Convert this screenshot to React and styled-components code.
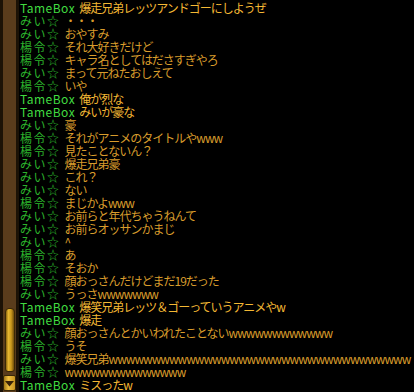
import styled, { createGlobalStyle } from 'styled-components';

const GlobalStyle = createGlobalStyle`
    html, body {
        margin: 0;
        padding: 0;
        background: #000;
    }
`

const lines = [
    ['TameBox', '爆走兄弟レッツアンドゴーにしようぜ'],
    ['みい☆', '・・・'],
    ['みい☆', 'おやすみ'],
    ['楊令☆', 'それ大好きだけど'],
    ['楊令☆', 'キャラ名としてはださすぎやろ'],
    ['みい☆', 'まって元ねたおしえて'],
    ['楊令☆', 'いや'],
    ['TameBox', '俺が烈な'],
    ['TameBox', 'みいが豪な'],
    ['みい☆', '豪'],
    ['楊令☆', 'それがアニメのタイトルやwww'],
    ['楊令☆', '見たことないん？'],
    ['みい☆', '爆走兄弟豪'],
    ['みい☆', 'これ？'],
    ['みい☆', 'ない'],
    ['楊令☆', 'まじかよwww'],
    ['みい☆', 'お前らと年代ちゃうねんて'],
    ['みい☆', 'お前らオッサンかまじ'],
    ['みい☆', '^'],
    ['楊令☆', 'あ'],
    ['楊令☆', 'そおか'],
    ['楊令☆', '顔おっさんだけどまだ19だった'],
    ['みい☆', 'うっさ' + 'w'.repeat(7)],
    ['TameBox', '爆笑兄弟レッツ＆ゴーっていうアニメやw'],
    ['TameBox', '爆走'],
    ['みい☆', '顔おっさんとかいわれたことない' + 'w'.repeat(12)],
    ['楊令☆', 'うそ'],
    ['みい☆', '爆笑兄弟' + 'w'.repeat(35)],
    ['楊令☆', 'w'.repeat(14)],
    ['TameBox', 'ミスったw'],
]

export default function App() {
    return (
        <>
            <GlobalStyle />
            <Frame>
                <ScrollBar>
                    <Thumb />
                    <ArrowButton>
                        <svg width="9" height="7" viewBox="0 0 9 7">
                            <path d="M0 1 H9 L4.5 6.5 Z" fill="#3a2408" />
                        </svg>
                    </ArrowButton>
                </ScrollBar>
                <Log>
                    {lines.map(([name, msg], i) => {
                        const host = name === 'TameBox'
                        return <Line key={i}>
                            <Name $host={host}>{name}</Name>
                            <Msg $host={host}>{msg}</Msg>
                        </Line>
                    })}
                </Log>
            </Frame>
        </>
    )
}

const Frame = styled.div`
    display: flex;
    width: 414px;
    height: 392px;
    overflow: hidden;
    background: #000;
`

const ScrollBar = styled.div`
    flex: 0 0 10px;
    display: flex;
    flex-direction: column;
    justify-content: flex-end;
    align-items: center;
    gap: 3px;
    background: #5a3c1c;
    border-left: 3px solid #1c1206;
    border-right: 3px solid #1c1206;
`

const Thumb = styled.div`
    width: 8px;
    height: 62px;
    border-radius: 4px 4px 3px 3px;
    background: linear-gradient(90deg, #8a6410 0%, #e8b830 30%, #c8961c 65%, #6e4c0a 100%);
    border: 1px solid #3a2808;
`

const ArrowButton = styled.div`
    width: 11px;
    height: 14px;
    margin-bottom: 1px;
    display: flex;
    align-items: center;
    justify-content: center;
    border-radius: 2px;
    background: linear-gradient(90deg, #a07818 0%, #f0c040 40%, #c89420 100%);
    border: 1px solid #3a2808;
`

const Log = styled.div`
    flex: 1;
    min-width: 0;
    display: flex;
    flex-direction: column;
    padding: 1px 0 0 1px;
    font-family: "Noto Sans CJK JP", "Liberation Sans", sans-serif;
    font-size: 12px;
    line-height: 13px;
    white-space: nowrap;
`

const Line = styled.div`
    display: flex;
    align-items: center;
    gap: 4px;
    height: 13px;
`

const Name = styled.span`
    line-height: 13px;
    letter-spacing: ${p => p.$host ? '0.5px' : '1.5px'};
    color: ${p => p.$host ? '#40dc40' : '#2cb42c'};
`

const Msg = styled.span`
    line-height: 13px;
    letter-spacing: -1px;
    color: ${p => p.$host ? '#f4b834' : '#d89c2c'};
`
